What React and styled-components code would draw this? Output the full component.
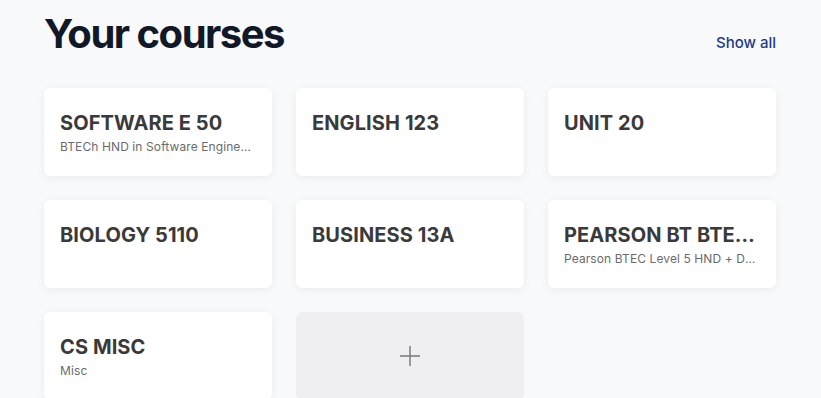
import React from "react";
import styled, { createGlobalStyle } from "styled-components";

const Global = createGlobalStyle`
  html, body { margin: 0; padding: 0; background: #f8f9fb; }
  body { font-family: Inter, "Noto Sans", sans-serif; -webkit-font-smoothing: antialiased; }
`;

const Page = styled.div`
  width: 732px;
  padding: 10px 0 0 44px;
`;

const Header = styled.div`
  display: flex;
  justify-content: space-between;
  align-items: baseline;
  height: 78px;
`;

const Title = styled.h1`
  margin: 0;
  font-size: 40px;
  line-height: 48px;
  font-weight: 700;
  letter-spacing: -1.5px;
  color: #111827;
`;

const ShowAll = styled.a`
  font-size: 15px;
  font-weight: 500;
  color: #1e3a8a;
  text-decoration: none;
`;

const Grid = styled.div`
  display: grid;
  grid-template-columns: repeat(3, 228px);
  grid-auto-rows: 88px;
  gap: 24px;
`;

const Card = styled.div`
  box-sizing: border-box;
  background: ${(p) => (p.$add ? "#efeff1" : "#ffffff")};
  border-radius: 6px;
  box-shadow: ${(p) => (p.$add ? "none" : "0 2px 8px rgba(0,0,0,0.06)")};
  padding: 23px 16px 0 16px;
  display: flex;
  flex-direction: column;
  ${(p) => p.$add && "align-items:center;justify-content:center;padding:0;"}
`;

const CardTitle = styled.div`
  font-size: 20px;
  line-height: 24px;
  font-weight: 700;
  letter-spacing: 0.1px;
  color: #3a3a3a;
  white-space: nowrap;
  overflow: hidden;
  text-overflow: ellipsis;
`;

const CardSub = styled.div`
  margin: 4px 4px 0 0;
  font-size: 12px;
  line-height: 16px;
  letter-spacing: 0.1px;
  color: #6b6b6b;
  white-space: nowrap;
  overflow: hidden;
  text-overflow: ellipsis;
`;

const courses = [
  { t: "SOFTWARE E 50", s: "BTECh HND in Software Engineering" },
  { t: "ENGLISH 123" },
  { t: "UNIT 20" },
  { t: "BIOLOGY 5110" },
  { t: "BUSINESS 13A" },
  { t: "PEARSON BT BTEC HND", s: "Pearson BTEC Level 5 HND + Diploma" },
  { t: "CS MISC", s: "Misc" },
];

export default function App() {
  return (
    <>
      <Global />
      <Page>
        <Header>
          <Title>Your courses</Title>
          <ShowAll href="#">Show all</ShowAll>
        </Header>
        <Grid>
          {courses.map((c) => (
            <Card key={c.t}>
              <CardTitle>{c.t}</CardTitle>
              {c.s && <CardSub>{c.s}</CardSub>}
            </Card>
          ))}
          <Card $add>
            <svg width="22" height="22" viewBox="0 0 22 22">
              <path d="M11 1v20M1 11h20" stroke="#777" strokeWidth="1.4" fill="none" />
            </svg>
          </Card>
        </Grid>
      </Page>
    </>
  );
}
